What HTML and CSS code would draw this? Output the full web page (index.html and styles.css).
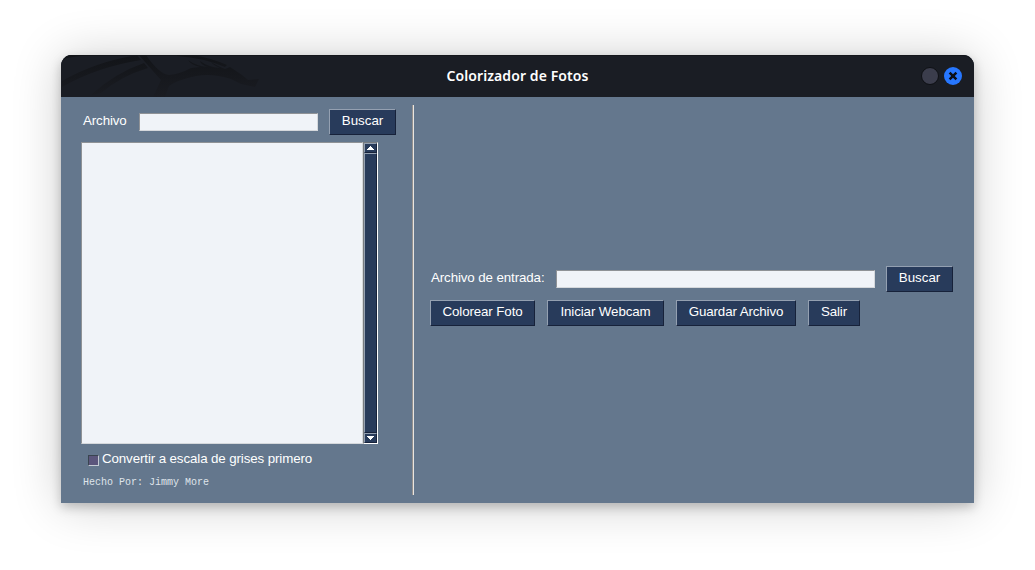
FILE: index.html
```html
<!DOCTYPE html>
<html lang="es">
<head>
<meta charset="utf-8">
<title>Colorizador de Fotos</title>
<link rel="stylesheet" href="styles.css">
</head>
<body>
<div class="window">
  <header class="titlebar">
    <svg class="dragon" width="200" height="42" viewBox="0 0 200 42" aria-hidden="true">
      <defs>
        <linearGradient id="ink" gradientUnits="userSpaceOnUse" x1="0" y1="0" x2="0" y2="42">
          <stop offset="0" stop-color="#121418"/>
          <stop offset="1" stop-color="#1a1c22"/>
        </linearGradient>
      </defs>
      <g fill="url(#ink)">
        <path d="M0 4Q15 1 32 0H5L0 2Z"/>
        <path d="M1 26Q34 7 76 0L80 5Q36 12 1 32Z"/>
        <path d="M30 40Q54 18 83 8L87 13Q60 21 40 38Z"/>
        <path d="M78 0H85Q98 19 108 20Q119 19 130 13L139 12Q130 10 127 5Q135 11 147 12Q140 10 139 6Q147 12 159 13Q152 10 150 7Q158 12 164 14L169 12L181 20L187 25L198 24L194 32L180 29L170 24Q151 18 135 21Q116 25 108 31L104 42H92L100 25Q91 15 78 0Z"/>
        <path d="M116 0H132Q150 3 166 10L164 12Q143 3 116 1Z"/>
      </g>
    </svg>
    <h1 class="title">Colorizador de Fotos</h1>
    <div class="controls">
      <span class="dot"></span>
      <span class="close">
        <svg width="18" height="18" viewBox="0 0 18 18"><path d="M5.6 5.6L12.4 12.4M12.4 5.6L5.6 12.4" stroke="#0b0f18" stroke-width="2.5" fill="none"/></svg>
      </span>
    </div>
  </header>
  <main class="content">
    <section class="left">
      <div class="row">
        <label class="label folder-label" for="folder">Archivo</label>
        <input class="field folder" id="folder">
        <button class="button browse">Buscar</button>
      </div>
      <div class="list">
        <div class="listbox"></div>
        <div class="scrollbar">
          <span class="arrow"><svg width="11" height="8" viewBox="0 0 11 8" shape-rendering="crispEdges"><path d="M5 2h1v1h1v1h1v1h1v1H2V5h1V4h1V3h1Z" fill="#fff"/></svg></span>
          <span class="thumb"></span>
          <span class="arrow"><svg width="11" height="8" viewBox="0 0 11 8" shape-rendering="crispEdges"><path d="M2 2h7v1h-1v1h-1v1h-1v1h-1V5h-1V4h-1V3h-1Z" fill="#fff"/></svg></span>
        </div>
      </div>
      <div class="check"><span class="box"></span><span class="label">Convertir a escala de grises primero</span></div>
      <p class="credit">Hecho Por: Jimmy More</p>
    </section>
    <div class="separator"></div>
    <section class="right">
      <div class="row">
        <label class="label input-label" for="source">Archivo de entrada:</label>
        <input class="field source" id="source">
        <button class="button browse">Buscar</button>
      </div>
      <div class="row actions">
        <button class="button color">Colorear Foto</button>
        <button class="button webcam">Iniciar Webcam</button>
        <button class="button save">Guardar Archivo</button>
        <button class="button exit">Salir</button>
      </div>
    </section>
  </main>
</div>
</body>
</html>
```

FILE: styles.css
```css
* { box-sizing: border-box; }

body {
  margin: 0;
  padding: 55px 61px;
  height: 570px;
  overflow: hidden;
  background: #fff;
  font-family: "Liberation Sans", Arial, sans-serif;
  font-size: 13.33px;
}

.window {
  width: 913px;
  height: 448px;
  border-radius: 11px 11px 0 0;
  background: #64778d;
  box-shadow: 0 4px 11px rgba(0, 0, 0, 0.22), 0 2px 50px rgba(0, 0, 0, 0.2);
}

.titlebar {
  position: relative;
  display: flex;
  align-items: center;
  justify-content: center;
  height: 42px;
  overflow: hidden;
  border-radius: 11px 11px 0 0;
  background: #1a1d24;
  box-shadow: inset 0 1px #14161b;
}

.dragon { position: absolute; left: 0; top: 0; }

.title {
  margin: 0;
  font: 600 14px/20px "Noto Sans", sans-serif;
  letter-spacing: 0.08px;
  color: #fff;
  white-space: nowrap;
}

.controls {
  position: absolute;
  right: 12px;
  top: 12px;
  display: flex;
  align-items: center;
  gap: 5px;
}

.dot {
  width: 18px;
  height: 18px;
  border: 1px solid #0e1014;
  border-radius: 50%;
  background: #3b3d4c;
}

.close {
  width: 18px;
  height: 18px;
  border-radius: 50%;
  background: #2777ff;
}

.close svg, .arrow svg { display: block; }

.content { display: flex; height: 406px; padding-top: 8px; }
.left { width: 351px; padding: 4px 0 0 20px; }
.row { display: flex; height: 26px; }

.label {
  color: #fff;
  line-height: 16px;
  letter-spacing: -0.11px;
  white-space: nowrap;
}

.folder-label { width: 58px; padding: 4px 0 0 2px; }
.input-label { width: 126px; padding: 4px 0 0 1px; }

.field {
  height: 18px;
  margin: 4px 11px 0 0;
  padding: 0;
  border: 1px solid;
  border-color: #8f9296 #d5d8dc #d5d8dc #8f9296;
  border-radius: 0;
  background: #f0f3f8;
  outline: 0;
}

.folder { width: 179px; }
.source { width: 319px; }

.button {
  height: 26px;
  padding: 0 0 3px;
  border: 1px solid;
  border-color: #94a0b1 #17223a #17223a #94a0b1;
  border-radius: 0;
  background: #283b5b;
  color: #fff;
  font: inherit;
  line-height: 16px;
  letter-spacing: -0.11px;
  white-space: nowrap;
}

.browse { width: 67px; letter-spacing: 0; }
.color { width: 105px; }
.webcam { width: 117px; }
.save { width: 120px; }
.exit { width: 52px; }

.list { display: flex; height: 302px; margin-top: 7px; }

.listbox {
  width: 282px;
  border: 1px solid;
  border-color: #8f9296 #d5d8dc #d5d8dc #8f9296;
  background: #f0f3f8;
}

.scrollbar {
  display: flex;
  flex-direction: column;
  width: 15px;
  border: 1px solid;
  border-color: #777b80 #fff #fff #777b80;
  background: #283b5b;
}

.arrow {
  height: 10px;
  border: 1px solid;
  border-color: #94a0b1 #17223a #17223a #94a0b1;
}

.thumb {
  flex: 1;
  border: 1px solid;
  border-color: #94a0b1 #17223a #17223a #94a0b1;
}

.check { display: flex; margin-top: 7px; padding-left: 7px; }

.box {
  width: 11px;
  height: 11px;
  margin: 4px 3px 0 0;
  border: 1px solid;
  border-color: #3a4450 #c5cbd4 #c5cbd4 #3a4450;
  background: #5b567c;
}

.credit {
  margin: 10px 0 0 2px;
  color: #dfe4ea;
  font: 10px/12px "Liberation Mono", monospace;
}

.separator {
  width: 2px;
  height: 390px;
  border-left: 1px solid #96928f;
  background: #e9e5e0;
}

.right { padding: 161px 0 0 16px; }
.actions { gap: 12px; margin-top: 8px; }
```
